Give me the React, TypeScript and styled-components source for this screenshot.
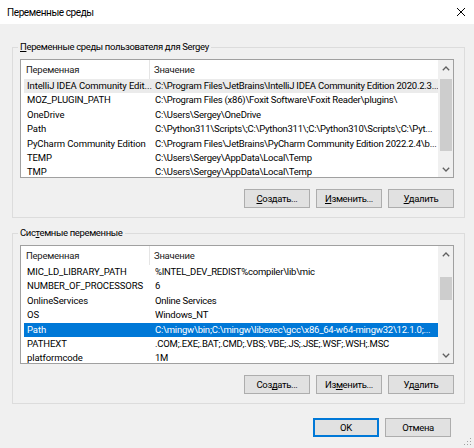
import React from 'react';
import styled, { createGlobalStyle } from 'styled-components';

const GlobalStyle = createGlobalStyle`
  html, body {
    margin: 0;
    padding: 0;
    background: #f0f0f0;
  }
  body {
    font-family: Roboto, "Noto Sans", "DejaVu Sans", sans-serif;
    font-size: 9.5px;
    letter-spacing: -0.1px;
    color: #000;
  }
`;

const Window = styled.div`
  position: relative;
  width: 474px;
  height: 448px;
  display: flex;
  flex-direction: column;
  background: #f0f0f0;
  overflow: hidden;
`;

const TitleBar = styled.div`
  height: 24px;
  flex: none;
  background: #fff;
  display: flex;
  align-items: center;
  justify-content: space-between;
  padding: 0 8px 0 7px;
  font-size: 10px;
  letter-spacing: -0.4px;
`;

const CloseButton = styled.div`
  width: 10px;
  height: 10px;
  display: flex;
`;

const Content = styled.div`
  flex: 1;
  display: flex;
  flex-direction: column;
  padding: 16px 9px 0 12px;
`;

const Group = styled.fieldset<{ $gap?: number }>`
  margin: ${p => p.$gap ?? 0}px 0 0 0;
  padding: 5px 10px 9px 7px;
  border: 1px solid #dcdcdc;
  min-width: 0;
  font: inherit;
`;

const Legend = styled.legend`
  padding: 0 2px;
  margin-left: -2px;
  line-height: 14px;
  letter-spacing: -0.35px;
`;

const ListBox = styled.div`
  height: 119px;
  box-sizing: border-box;
  border: 1px solid #a0a0a0;
  background: #fff;
  display: flex;
`;

const Table = styled.div`
  flex: 1;
  min-width: 0;
  overflow: hidden;
`;

const HeaderRow = styled.div`
  height: 19px;
  display: flex;
  align-items: center;
`;

const HeaderCell = styled.div<{ $first?: boolean }>`
  box-sizing: border-box;
  height: 19px;
  line-height: 19px;
  width: ${p => (p.$first ? '129px' : 'auto')};
  flex: ${p => (p.$first ? 'none' : '1')};
  padding-left: ${p => (p.$first ? '5px' : '4px')};
  border-right: ${p => (p.$first ? '1px solid #e5e5e5' : 'none')};
  color: #1a1a1a;
  letter-spacing: -0.25px;
`;

const Row = styled.div<{ $state?: 'selected' | 'inactive' }>`
  height: 14.4px;
  line-height: 14.4px;
  margin-left: 3px;
  display: flex;
  white-space: nowrap;
  background: ${p =>
    p.$state === 'selected' ? '#0078d7' : p.$state === 'inactive' ? '#ebebeb' : 'transparent'};
  color: ${p => (p.$state === 'selected' ? '#fff' : '#000')};
`;

const NameCell = styled.div`
  box-sizing: border-box;
  width: 131px;
  flex: none;
  padding-left: 3px;
  overflow: hidden;
`;

const ValueCell = styled.div`
  flex: 1;
  min-width: 0;
  overflow: hidden;
  letter-spacing: -0.22px;
`;

const ScrollBar = styled.div`
  width: 15px;
  flex: none;
  background: #f0f0f0;
  display: flex;
  flex-direction: column;
`;

const ArrowBox = styled.div`
  height: 16px;
  flex: none;
  display: flex;
  align-items: center;
  justify-content: center;
`;

const Track = styled.div`
  flex: 1;
  display: flex;
  flex-direction: column;
`;

const Thumb = styled.div<{ $offset: number; $size: number }>`
  margin: ${p => p.$offset}px 1px 0 2px;
  height: ${p => p.$size}px;
  background: #cdcdcd;
`;

const ButtonRow = styled.div<{ $padRight?: number; $top?: number }>`
  display: flex;
  justify-content: flex-end;
  gap: 6px;
  margin-top: ${p => p.$top ?? 11}px;
  padding-right: ${p => p.$padRight ?? 0}px;
`;

const Button = styled.div<{ $default?: boolean }>`
  box-sizing: border-box;
  width: 66px;
  height: 19px;
  display: flex;
  align-items: center;
  justify-content: center;
  background: #e1e1e1;
  border: 1px solid ${p => (p.$default ? '#0078d7' : '#adadad')};
  box-shadow: ${p => (p.$default ? 'inset 0 0 0 1px #0078d7' : 'none')};
  letter-spacing: -0.35px;
`;

const Grip = styled.div`
  position: absolute;
  right: 2px;
  bottom: 2px;
  width: 8px;
  height: 8px;
  display: flex;
`;

type Variable = { name: string; value: string; state?: 'selected' | 'inactive' };

const userVars: Variable[] = [
  {
    name: 'IntelliJ IDEA Community Edit...',
    value: 'C:\\Program Files\\JetBrains\\IntelliJ IDEA Community Edition 2020.2.3...',
    state: 'inactive',
  },
  { name: 'MOZ_PLUGIN_PATH', value: 'C:\\Program Files (x86)\\Foxit Software\\Foxit Reader\\plugins\\' },
  { name: 'OneDrive', value: 'C:\\Users\\Sergey\\OneDrive' },
  { name: 'Path', value: 'C:\\Python311\\Scripts\\;C:\\Python311\\;C:\\Python310\\Scripts\\;C:\\Pyt...' },
  {
    name: 'PyCharm Community Edition',
    value: 'C:\\Program Files\\JetBrains\\PyCharm Community Edition 2022.2.4\\b...',
  },
  { name: 'TEMP', value: 'C:\\Users\\Sergey\\AppData\\Local\\Temp' },
  { name: 'TMP', value: 'C:\\Users\\Sergey\\AppData\\Local\\Temp' },
];

const systemVars: Variable[] = [
  { name: 'MIC_LD_LIBRARY_PATH', value: '%INTEL_DEV_REDIST%compiler\\lib\\mic' },
  { name: 'NUMBER_OF_PROCESSORS', value: '6' },
  { name: 'OnlineServices', value: 'Online Services' },
  { name: 'OS', value: 'Windows_NT' },
  {
    name: 'Path',
    value: 'C:\\mingw\\bin;C:\\mingw\\libexec\\gcc\\x86_64-w64-mingw32\\12.1.0;...',
    state: 'selected',
  },
  { name: 'PATHEXT', value: '.COM;.EXE;.BAT;.CMD;.VBS;.VBE;.JS;.JSE;.WSF;.WSH;.MSC' },
  { name: 'platformcode', value: '1M' },
];

const Chevron: React.FC<{ down?: boolean }> = ({ down }) => (
  <svg width="8" height="5" viewBox="0 0 8 5">
    <polyline
      points={down ? '0.8,0.8 4,4 7.2,0.8' : '0.8,4.2 4,1 7.2,4.2'}
      fill="none"
      stroke="#606060"
      strokeWidth="1.3"
    />
  </svg>
);

// one of the two list views with its scroll bar
const VarList: React.FC<{ items: Variable[]; thumbOffset: number; thumbSize: number }> = ({
  items,
  thumbOffset,
  thumbSize,
}) => (
  <ListBox>
    <Table>
      <HeaderRow>
        <HeaderCell $first>Переменная</HeaderCell>
        <HeaderCell>Значение</HeaderCell>
      </HeaderRow>
      {items.map(v => (
        <Row key={v.name + v.value} $state={v.state}>
          <NameCell>{v.name}</NameCell>
          <ValueCell>{v.value}</ValueCell>
        </Row>
      ))}
    </Table>
    <ScrollBar>
      <ArrowBox>
        <Chevron />
      </ArrowBox>
      <Track>
        <Thumb $offset={thumbOffset} $size={thumbSize} />
      </Track>
      <ArrowBox>
        <Chevron down />
      </ArrowBox>
    </ScrollBar>
  </ListBox>
);

const App: React.FC = () => {
  return (
    <>
      <GlobalStyle />
      <Window>
        <TitleBar>
          <span>Переменные среды</span>
          <CloseButton>
            <svg width="10" height="10" viewBox="0 0 10 10">
              <path d="M1 1 L9 9 M9 1 L1 9" stroke="#000" strokeWidth="1" fill="none" />
            </svg>
          </CloseButton>
        </TitleBar>
        <Content>
          <Group>
            <Legend>
              <u>П</u>еременные среды пользователя для Sergey
            </Legend>
            <VarList items={userVars} thumbOffset={3} thumbSize={72} />
            <ButtonRow>
              <Button>
                <span>
                  <u>С</u>оздать...
                </span>
              </Button>
              <Button>
                <span>
                  <u>И</u>зменить...
                </span>
              </Button>
              <Button>
                <span>
                  <u>У</u>далить
                </span>
              </Button>
            </ButtonRow>
          </Group>
          <Group $gap={8}>
            <Legend>
              Сис<u>т</u>емные переменные
            </Legend>
            <VarList items={systemVars} thumbOffset={15} thumbSize={23} />
            <ButtonRow>
              <Button>
                <span>
                  Соз<u>д</u>ать...
                </span>
              </Button>
              <Button>
                <span>
                  Из<u>м</u>енить...
                </span>
              </Button>
              <Button>
                <span>
                  Уд<u>а</u>лить
                </span>
              </Button>
            </ButtonRow>
          </Group>
          <ButtonRow $padRight={14} $top={14}>
            <Button $default>OK</Button>
            <Button>Отмена</Button>
          </ButtonRow>
        </Content>
        <Grip>
          <svg width="8" height="8" viewBox="0 0 8 8">
            <rect x="6" y="0" width="1" height="1" fill="#a0a0a0" />
            <rect x="3" y="3" width="1" height="1" fill="#a0a0a0" />
            <rect x="6" y="3" width="1" height="1" fill="#a0a0a0" />
            <rect x="0" y="6" width="1" height="1" fill="#a0a0a0" />
            <rect x="3" y="6" width="1" height="1" fill="#a0a0a0" />
            <rect x="6" y="6" width="1" height="1" fill="#a0a0a0" />
          </svg>
        </Grip>
      </Window>
    </>
  );
};

export default App;
